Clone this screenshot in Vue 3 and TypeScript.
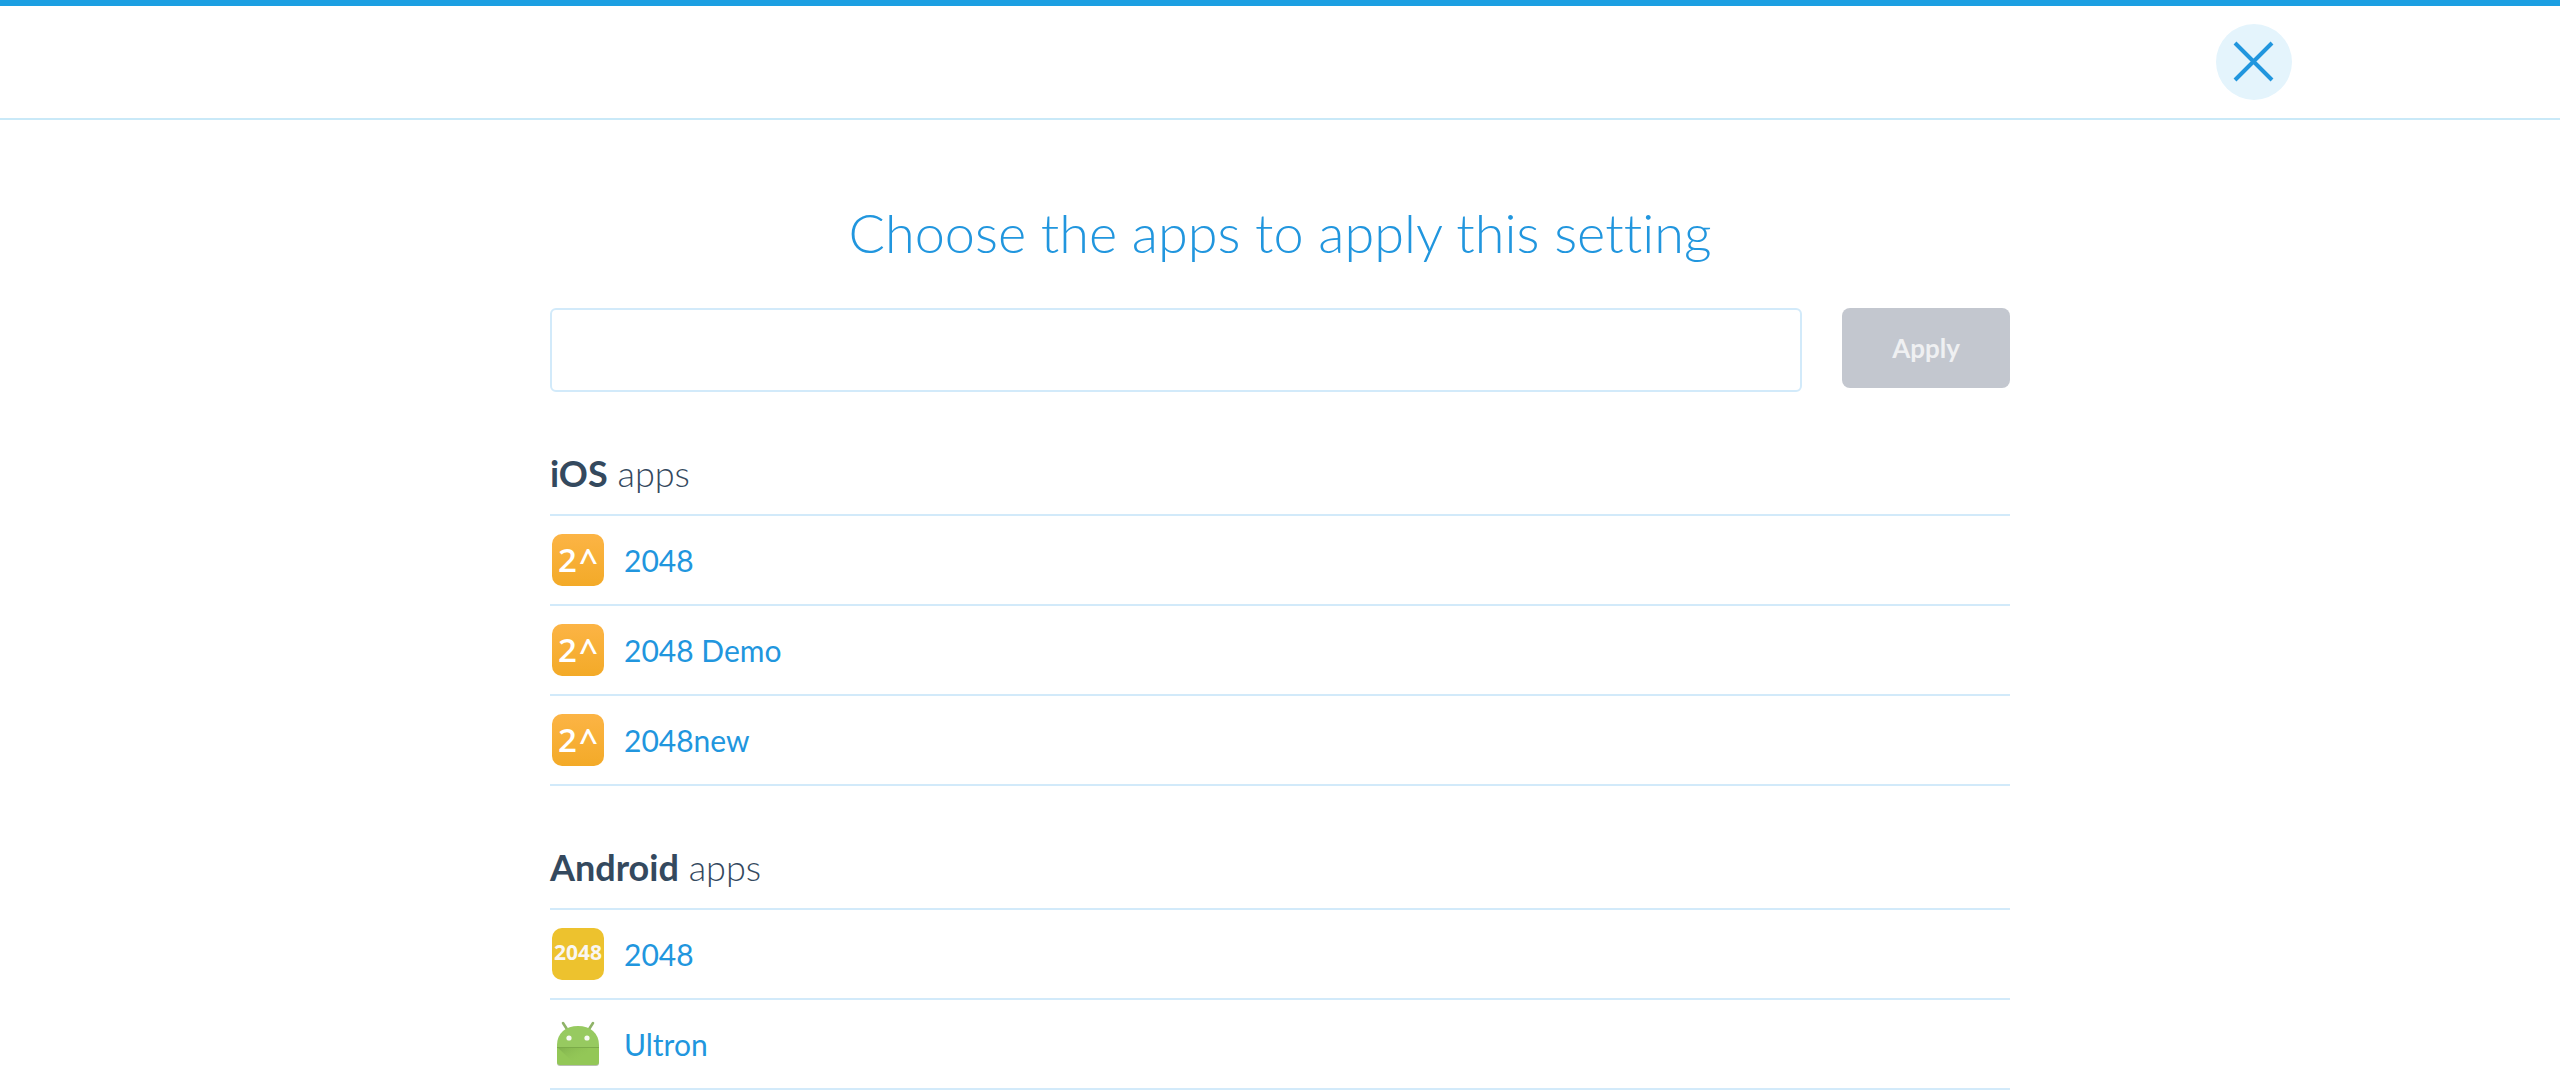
<script setup lang="ts">
type IconKind = 'caret' | 'tile' | 'robot'

interface AppEntry {
  name: string
  icon: IconKind
}

interface AppGroup {
  platform: string
  apps: AppEntry[]
}

const groups: AppGroup[] = [
  {
    platform: 'iOS',
    apps: [
      { name: '2048', icon: 'caret' },
      { name: '2048 Demo', icon: 'caret' },
      { name: '2048new', icon: 'caret' },
    ],
  },
  {
    platform: 'Android',
    apps: [
      { name: '2048', icon: 'tile' },
      { name: 'Ultron', icon: 'robot' },
    ],
  },
]
</script>

<template>
  <div class="page">
    <header class="topbar">
      <div class="topbar-inner">
        <button class="close" type="button" aria-label="Close">
          <svg viewBox="0 0 76 76" width="76" height="76" aria-hidden="true">
            <path d="M19 19L56 56M56 19L19 56" fill="none" stroke="#2196de" stroke-width="4" />
          </svg>
        </button>
      </div>
    </header>

    <main class="content">
      <h1 class="title">Choose the apps to apply this setting</h1>

      <form class="search" @submit.prevent>
        <input class="search-input" type="text" aria-label="Apps" />
        <button class="apply" type="submit" disabled>Apply</button>
      </form>

      <section v-for="group in groups" :key="group.platform" class="group">
        <h2 class="group-title"><strong>{{ group.platform }}</strong> apps</h2>
        <ul class="list">
          <li v-for="app in group.apps" :key="app.name" class="item">
            <a class="item-link" href="#">
              <svg v-if="app.icon === 'caret'" class="icon" viewBox="0 0 52 52" aria-hidden="true">
                <defs>
                  <linearGradient id="amber" x1="0" y1="0" x2="0" y2="1">
                    <stop offset="0" stop-color="#fcb445" />
                    <stop offset="1" stop-color="#f3aa28" />
                  </linearGradient>
                </defs>
                <rect width="52" height="52" rx="10" fill="url(#amber)" />
                <text class="glyph-caret" x="6" y="38">2</text>
                <text class="glyph-caret" x="27" y="39">^</text>
              </svg>
              <svg v-else-if="app.icon === 'tile'" class="icon" viewBox="0 0 52 52" aria-hidden="true">
                <rect width="52" height="52" rx="10" fill="#edc22e" />
                <text class="glyph-tile" x="26" y="32" text-anchor="middle">2048</text>
              </svg>
              <svg v-else class="icon" viewBox="0 0 52 52" aria-hidden="true">
                <defs>
                  <linearGradient id="fold" x1="0" y1="0" x2="1" y2="1">
                    <stop offset="0" stop-color="#6f9d43" stop-opacity="0.6" />
                    <stop offset="0.7" stop-color="#8fc255" stop-opacity="0" />
                  </linearGradient>
                </defs>
                <path d="M5 29H47V45a3 3 0 0 1-3 3H8a3 3 0 0 1-3-3Z" fill="#b9bfb3" />
                <path d="M11 5L15.500 12M41 5L36.500 12" stroke="#8fb368" stroke-width="2.600" stroke-linecap="round" />
                <path d="M5 29V27C5 15 14 8 26 8S47 15 47 27V29Z" fill="#97ca60" />
                <path d="M5 29H47V44a3 3 0 0 1-3 3H8a3 3 0 0 1-3-3Z" fill="#93c757" />
                <path d="M5 29H36V47H24Z" fill="url(#fold)" />
                <path d="M5 29.500H47" stroke="#7bab49" stroke-width="1" />
                <circle cx="17" cy="20" r="2.600" fill="#f7faf4" />
                <circle cx="35" cy="20" r="2.600" fill="#f7faf4" />
              </svg>
              <span>{{ app.name }}</span>
            </a>
          </li>
        </ul>
      </section>
    </main>
  </div>
</template>

<style>
body {
  margin: 0;
  background: #fff;
}
</style>

<style scoped>
.page {
  font-family: Lato, "Open Sans", sans-serif;
  font-variant-ligatures: none;
  color: #34495e;
}

.topbar {
  border-top: 6px solid #1c9fe2;
  border-bottom: 2px solid #c9e9f8;
}

.topbar-inner {
  display: flex;
  justify-content: flex-end;
  max-width: 2024px;
  margin: 0 auto;
  padding: 18px 0;
}

.close {
  width: 76px;
  height: 76px;
  padding: 0;
  border: 0;
  border-radius: 50%;
  background: #e4f4fc;
  cursor: pointer;
}

.close svg {
  display: block;
}

.content {
  max-width: 1460px;
  margin: 0 auto;
  padding-top: 80px;
}

.title {
  margin: 0 0 42px;
  font-size: 54px;
  line-height: 66px;
  font-weight: 300;
  text-align: center;
  color: #2196de;
}

.search {
  display: flex;
  align-items: flex-start;
  gap: 40px;
}

.search-input {
  box-sizing: border-box;
  flex: 1;
  min-width: 0;
  height: 84px;
  padding: 0 20px;
  border: 2px solid #d2eafa;
  border-radius: 6px;
  background: #fff;
  font: inherit;
  font-size: 30px;
  color: inherit;
}

.apply {
  width: 168px;
  height: 80px;
  padding: 0;
  border: 0;
  border-radius: 8px;
  background: #c3c7cf;
  color: #eff0f2;
  font-family: inherit;
  font-size: 26px;
  font-weight: 700;
}

.group {
  padding-top: 60px;
}

.group-title {
  margin: 0;
  padding-bottom: 20px;
  border-bottom: 2px solid #d2eafa;
  font-size: 36px;
  line-height: 42px;
  font-weight: 300;
}

.group-title strong {
  font-weight: 700;
}

.list {
  margin: 0;
  padding: 0;
  list-style: none;
}

.item {
  border-bottom: 2px solid #d2eafa;
}

.item-link {
  display: flex;
  align-items: center;
  gap: 20px;
  height: 88px;
  padding-left: 2px;
  font-size: 30px;
  color: #2196de;
  text-decoration: none;
}

.icon {
  flex: none;
  width: 52px;
  height: 52px;
}

.glyph-caret,
.glyph-tile {
  font-family: "Open Sans", sans-serif;
  fill: #fff;
}

.glyph-caret {
  font-size: 33px;
  font-weight: 600;
}

.glyph-tile {
  font-size: 21px;
  font-weight: 700;
  fill: #f9f6f2;
}
</style>
